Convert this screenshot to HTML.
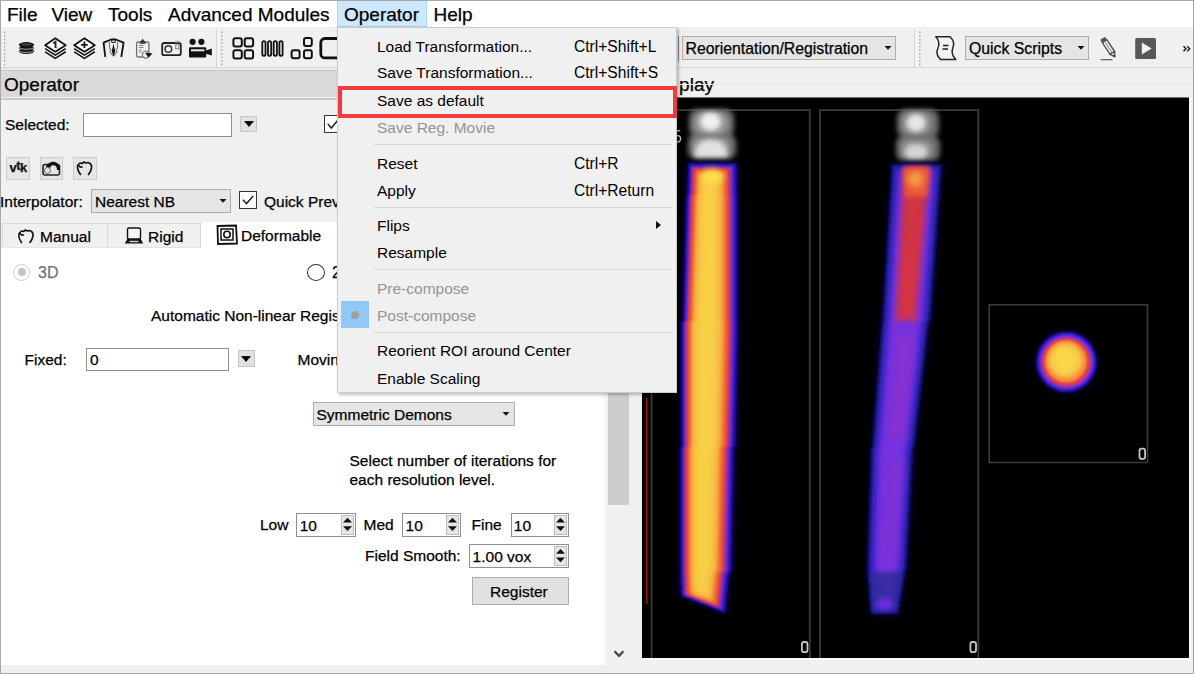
<!DOCTYPE html>
<html><head><meta charset="utf-8"><style>
html,body{margin:0;padding:0;width:1194px;height:674px;overflow:hidden;background:#f0f0f0}
body>div{position:absolute}
.t{position:absolute;font-family:"Liberation Sans",sans-serif;white-space:nowrap;line-height:normal;-webkit-text-stroke:0.25px currentColor}
</style></head><body>
<div style="left:0px;top:0px;width:1194px;height:674px;background:#f0f0f0"></div>
<div style="left:0px;top:0px;width:1194px;height:27px;background:#fff"></div>
<div style="left:337px;top:1px;width:90px;height:26px;background:#cce8ff;border:1px solid #a9d5fa;border-top:none;box-sizing:border-box"></div>
<div class="t" style="left:7px;top:3.80px;font-size:19px;color:#000;">File</div>
<div class="t" style="left:51.5px;top:3.80px;font-size:19px;color:#000;">View</div>
<div class="t" style="left:108px;top:3.80px;font-size:19px;color:#000;">Tools</div>
<div class="t" style="left:168px;top:3.80px;font-size:19px;color:#000;">Advanced Modules</div>
<div class="t" style="left:344px;top:3.80px;font-size:19px;color:#000;">Operator</div>
<div class="t" style="left:433.5px;top:3.80px;font-size:19px;color:#000;">Help</div>
<div style="left:0px;top:27px;width:1194px;height:41px;background:#f0f0f0"></div>
<div style="left:0px;top:67px;width:1194px;height:1.2px;background:#d6d6d6"></div>
<div style="left:681.5px;top:36px;width:214.5px;height:23.5px;background:#e5e5e5;border:1px solid #adadad;box-sizing:border-box"></div>
<div class="t" style="left:685.5px;top:39.70px;font-size:15.8px;color:#000;">Reorientation/Registration</div>
<svg style="position:absolute;left:883.5px;top:44.75px;" width="8" height="6" viewBox="0 0 8 6"><path d="M0.5 1 L7.5 1 L4 4.8Z" fill="#111"/></svg>
<div style="left:965px;top:36px;width:124px;height:23.5px;background:#e5e5e5;border:1px solid #adadad;box-sizing:border-box"></div>
<div class="t" style="left:969px;top:39.70px;font-size:15.8px;color:#000;">Quick Scripts</div>
<svg style="position:absolute;left:1076.8px;top:44.75px;" width="8" height="6" viewBox="0 0 8 6"><path d="M0.5 1 L7.5 1 L4 4.8Z" fill="#111"/></svg>
<svg style="position:absolute;left:0;top:0" width="1194" height="70" viewBox="0 0 1194 70"><rect x="4.5" y="32.2" width="1.4" height="1.4" fill="#ffffff"/><rect x="3.9" y="31.6" width="1.5" height="1.5" fill="#a4a4a4"/><rect x="4.5" y="35.8" width="1.4" height="1.4" fill="#ffffff"/><rect x="3.9" y="35.2" width="1.5" height="1.5" fill="#a4a4a4"/><rect x="4.5" y="39.4" width="1.4" height="1.4" fill="#ffffff"/><rect x="3.9" y="38.8" width="1.5" height="1.5" fill="#a4a4a4"/><rect x="4.5" y="42.9" width="1.4" height="1.4" fill="#ffffff"/><rect x="3.9" y="42.3" width="1.5" height="1.5" fill="#a4a4a4"/><rect x="4.5" y="46.5" width="1.4" height="1.4" fill="#ffffff"/><rect x="3.9" y="45.9" width="1.5" height="1.5" fill="#a4a4a4"/><rect x="4.5" y="50.1" width="1.4" height="1.4" fill="#ffffff"/><rect x="3.9" y="49.5" width="1.5" height="1.5" fill="#a4a4a4"/><rect x="4.5" y="53.7" width="1.4" height="1.4" fill="#ffffff"/><rect x="3.9" y="53.1" width="1.5" height="1.5" fill="#a4a4a4"/><rect x="4.5" y="57.3" width="1.4" height="1.4" fill="#ffffff"/><rect x="3.9" y="56.7" width="1.5" height="1.5" fill="#a4a4a4"/><rect x="4.5" y="60.8" width="1.4" height="1.4" fill="#ffffff"/><rect x="3.9" y="60.2" width="1.5" height="1.5" fill="#a4a4a4"/><rect x="4.5" y="64.4" width="1.4" height="1.4" fill="#ffffff"/><rect x="3.9" y="63.8" width="1.5" height="1.5" fill="#a4a4a4"/><rect x="221.8" y="32.2" width="1.4" height="1.4" fill="#ffffff"/><rect x="221.2" y="31.6" width="1.5" height="1.5" fill="#a4a4a4"/><rect x="221.8" y="35.8" width="1.4" height="1.4" fill="#ffffff"/><rect x="221.2" y="35.2" width="1.5" height="1.5" fill="#a4a4a4"/><rect x="221.8" y="39.4" width="1.4" height="1.4" fill="#ffffff"/><rect x="221.2" y="38.8" width="1.5" height="1.5" fill="#a4a4a4"/><rect x="221.8" y="42.9" width="1.4" height="1.4" fill="#ffffff"/><rect x="221.2" y="42.3" width="1.5" height="1.5" fill="#a4a4a4"/><rect x="221.8" y="46.5" width="1.4" height="1.4" fill="#ffffff"/><rect x="221.2" y="45.9" width="1.5" height="1.5" fill="#a4a4a4"/><rect x="221.8" y="50.1" width="1.4" height="1.4" fill="#ffffff"/><rect x="221.2" y="49.5" width="1.5" height="1.5" fill="#a4a4a4"/><rect x="221.8" y="53.7" width="1.4" height="1.4" fill="#ffffff"/><rect x="221.2" y="53.1" width="1.5" height="1.5" fill="#a4a4a4"/><rect x="221.8" y="57.3" width="1.4" height="1.4" fill="#ffffff"/><rect x="221.2" y="56.7" width="1.5" height="1.5" fill="#a4a4a4"/><rect x="221.8" y="60.8" width="1.4" height="1.4" fill="#ffffff"/><rect x="221.2" y="60.2" width="1.5" height="1.5" fill="#a4a4a4"/><rect x="221.8" y="64.4" width="1.4" height="1.4" fill="#ffffff"/><rect x="221.2" y="63.8" width="1.5" height="1.5" fill="#a4a4a4"/><rect x="919.7" y="32.2" width="1.4" height="1.4" fill="#ffffff"/><rect x="919.1" y="31.6" width="1.5" height="1.5" fill="#a4a4a4"/><rect x="919.7" y="35.8" width="1.4" height="1.4" fill="#ffffff"/><rect x="919.1" y="35.2" width="1.5" height="1.5" fill="#a4a4a4"/><rect x="919.7" y="39.4" width="1.4" height="1.4" fill="#ffffff"/><rect x="919.1" y="38.8" width="1.5" height="1.5" fill="#a4a4a4"/><rect x="919.7" y="42.9" width="1.4" height="1.4" fill="#ffffff"/><rect x="919.1" y="42.3" width="1.5" height="1.5" fill="#a4a4a4"/><rect x="919.7" y="46.5" width="1.4" height="1.4" fill="#ffffff"/><rect x="919.1" y="45.9" width="1.5" height="1.5" fill="#a4a4a4"/><rect x="919.7" y="50.1" width="1.4" height="1.4" fill="#ffffff"/><rect x="919.1" y="49.5" width="1.5" height="1.5" fill="#a4a4a4"/><rect x="919.7" y="53.7" width="1.4" height="1.4" fill="#ffffff"/><rect x="919.1" y="53.1" width="1.5" height="1.5" fill="#a4a4a4"/><rect x="919.7" y="57.3" width="1.4" height="1.4" fill="#ffffff"/><rect x="919.1" y="56.7" width="1.5" height="1.5" fill="#a4a4a4"/><rect x="919.7" y="60.8" width="1.4" height="1.4" fill="#ffffff"/><rect x="919.1" y="60.2" width="1.5" height="1.5" fill="#a4a4a4"/><rect x="919.7" y="64.4" width="1.4" height="1.4" fill="#ffffff"/><rect x="919.1" y="63.8" width="1.5" height="1.5" fill="#a4a4a4"/><rect x="216.5" y="28.5" width="1" height="38.5" fill="#c4c4c4"/><rect x="217.5" y="28.5" width="1" height="38.5" fill="#ffffff"/><rect x="914.3" y="28.5" width="1" height="38.5" fill="#c4c4c4"/><rect x="915.3" y="28.5" width="1" height="38.5" fill="#ffffff"/><ellipse cx="26.5" cy="51.3" rx="7.7" ry="2.7" fill="#111"/><ellipse cx="26.5" cy="48.1" rx="7.7" ry="2.7" fill="#111"/><ellipse cx="26.5" cy="44.8" rx="7.7" ry="2.7" fill="#111"/><path d="M18.9 47.2 A7.7 2.4 0 0 0 34.1 47.2" fill="none" stroke="#bdbdbd" stroke-width="0.9"/><path d="M18.9 50.4 A7.7 2.4 0 0 0 34.1 50.4" fill="none" stroke="#bdbdbd" stroke-width="0.9"/><ellipse cx="26.5" cy="44.5" rx="5.5" ry="1.3" fill="#3a3a3a"/><path d="M45.099999999999994 51.8 L55.3 58.4 L65.7 51.8" fill="none" stroke="#111" stroke-width="1.6" stroke-linejoin="round"/><path d="M45.099999999999994 48.6 L55.3 55.1 L65.7 48.6" fill="none" stroke="#111" stroke-width="1.6" stroke-linejoin="round"/><path d="M45.099999999999994 45.3 L55.3 38.3 L65.7 45.3 L55.3 51.8Z" fill="#fff" stroke="#111" stroke-width="1.7" stroke-linejoin="round"/><path d="M53.3 43.2 L55.5 41.8 L55.5 48" fill="none" stroke="#222" stroke-width="1.9"/><rect x="56.5" y="47.2" width="1.3" height="1.3" fill="#888"/><path d="M74.2 51.8 L84.4 58.4 L94.80000000000001 51.8" fill="none" stroke="#111" stroke-width="1.6" stroke-linejoin="round"/><path d="M74.2 48.6 L84.4 55.1 L94.80000000000001 48.6" fill="none" stroke="#111" stroke-width="1.6" stroke-linejoin="round"/><path d="M74.2 45.3 L84.4 38.3 L94.80000000000001 45.3 L84.4 51.8Z" fill="#fff" stroke="#111" stroke-width="1.7" stroke-linejoin="round"/><path d="M81.10000000000001 44.8 H87.7 M84.4 41.5 V48.1" stroke="#111" stroke-width="1.8"/><path d="M105.3 57 L103.6 42.6 L111.2 39.5 L115.8 39.5 L123.6 42.6 L121.3 57" fill="none" stroke="#111" stroke-width="1.8" stroke-linejoin="round"/><path d="M111.5 39.5 L112 42.5 L115 42.5 L115.6 39.5" fill="none" stroke="#333" stroke-width="1.2"/><path d="M113.5 43.5 L111.8 51 L113.5 57 L115.2 51Z" fill="#111"/><path d="M109.5 42 L109.5 48 L111 50 L110 51.5 L113 56" fill="none" stroke="#777" stroke-width="1.1"/><path d="M117.5 42 L117.5 48 L116 50 L117 51.5 L114 56" fill="none" stroke="#777" stroke-width="1.1"/><rect x="136.6" y="42" width="12.3" height="15" rx="1.5" fill="none" stroke="#707070" stroke-width="1.3"/><path d="M139.8 42.6 L142.7 38.8 L145.6 42.6Z" fill="#333"/><rect x="139.8" y="42.4" width="5.8" height="1.4" fill="#333"/><path d="M139 45.5 H143.5 M139 47.5 H143.5 M139 50 H141.5 M139 52 H141.5" stroke="#888" stroke-width="1"/><circle cx="146" cy="54.6" r="3.6" fill="#f0f0f0" stroke="#777" stroke-width="1.2"/><path d="M145 52.6 L152.6 53.4 L148.4 57.6Z" fill="#111"/><rect x="162.2" y="43" width="18.6" height="12.2" rx="2" fill="none" stroke="#222" stroke-width="1.8"/><circle cx="168.4" cy="49" r="3.3" fill="none" stroke="#333" stroke-width="1.5"/><rect x="175.7" y="44.9" width="3.2" height="3.8" fill="none" stroke="#888" stroke-width="1"/><rect x="175" y="40.8" width="4.6" height="1.8" fill="#aaa"/><circle cx="192.6" cy="41.8" r="3.1" fill="#111"/><circle cx="201.4" cy="41.8" r="3.1" fill="#111"/><rect x="189" y="47.2" width="17.2" height="10.3" rx="1" fill="#111"/><rect x="191" y="49.3" width="13.4" height="2" fill="#eee"/><path d="M206 50.5 L211.8 48.4 L211.8 55.4 L206 53.8Z" fill="#111"/><rect x="233.4" y="38.2" width="8.4" height="8.3" rx="2" fill="none" stroke="#111" stroke-width="2"/><rect x="233.4" y="50.3" width="8.4" height="8.3" rx="2" fill="none" stroke="#111" stroke-width="2"/><rect x="244.7" y="38.2" width="8.4" height="8.3" rx="2" fill="none" stroke="#111" stroke-width="2"/><rect x="244.7" y="50.3" width="8.4" height="8.3" rx="2" fill="none" stroke="#111" stroke-width="2"/><rect x="262.29999999999995" y="41.2" width="3.2" height="14.6" rx="1.6" fill="none" stroke="#111" stroke-width="1.8"/><rect x="267.99999999999994" y="41.2" width="3.2" height="14.6" rx="1.6" fill="none" stroke="#111" stroke-width="1.8"/><rect x="273.69999999999993" y="41.2" width="3.2" height="14.6" rx="1.6" fill="none" stroke="#111" stroke-width="1.8"/><rect x="279.4" y="41.2" width="3.2" height="14.6" rx="1.6" fill="none" stroke="#111" stroke-width="1.8"/><rect x="291.6" y="50.2" width="8" height="8" rx="2" fill="none" stroke="#111" stroke-width="2"/><rect x="304" y="38.1" width="7.8" height="8" rx="2" fill="none" stroke="#111" stroke-width="2"/><rect x="304" y="50.2" width="7.8" height="8" rx="2" fill="none" stroke="#111" stroke-width="2"/><rect x="320.8" y="38.5" width="30" height="19.4" rx="4" fill="none" stroke="#111" stroke-width="2.8"/><path d="M935.8 36.8 L950 36.8 Q955.5 42 952.8 48 Q950.5 54 955.8 59.5 L940.5 59.5 Q935 54 938 48 Q940.5 42 935.8 36.8Z" fill="#f4f4f4" stroke="#222" stroke-width="1.5" stroke-linejoin="round"/><path d="M943 45.5 H948.5 M942.5 49 H948" stroke="#222" stroke-width="1.4"/><g transform="translate(1102.6,38.2) rotate(-33.5)"><rect x="-2.9" y="0" width="5.8" height="3.6" rx="1" fill="#555"/><rect x="-2.7" y="3.6" width="5.4" height="14" fill="#e8e8e8" stroke="#4a4a4a" stroke-width="1.3"/><path d="M-2.7 17.6 L2.7 17.6 L0 22.5Z" fill="#e8e8e8" stroke="#4a4a4a" stroke-width="1.2" stroke-linejoin="round"/><path d="M-1 20 L1 20 L0 22.5Z" fill="#333"/><path d="M0 4 V17" stroke="#888" stroke-width="0.9"/></g><rect x="1100.7" y="59" width="11.7" height="1.3" fill="#666"/><rect x="1135.2" y="38.1" width="20.8" height="20.8" rx="1.5" fill="#585858"/><path d="M1141.8 42.5 L1151.6 48.5 L1141.8 54.5Z" fill="#f2f2f2"/><path d="M1183.5 46.2 L1186 48.7 L1183.5 51.2 M1187.2 46.2 L1189.7 48.7 L1187.2 51.2" fill="none" stroke="#222" stroke-width="1.5"/></svg>
<div style="left:677.5px;top:36px;width:1.5px;height:26px;background:#8c8c8c"></div>
<div style="left:0px;top:68.2px;width:606px;height:2px;background:#eaeaea"></div>
<div style="left:0px;top:70.2px;width:606px;height:1px;background:#c8c8c8"></div>
<div style="left:0px;top:71.2px;width:606px;height:26.3px;background:#d9d9d9"></div>
<div style="left:0px;top:97.5px;width:606px;height:2.3px;background:#c9c9c9"></div>
<div class="t" style="left:4px;top:74.10px;font-size:19px;color:#000;">Operator</div>
<div style="left:0px;top:100px;width:606px;height:148px;background:#f0f0f0"></div>
<div class="t" style="left:5px;top:115.97px;font-size:15.5px;color:#000;">Selected:</div>
<div style="left:83px;top:113px;width:149px;height:24px;background:#fff;border:1px solid #8f8f8f;box-sizing:border-box"></div>
<div style="left:240px;top:116px;width:17px;height:16px;background:#e1e1e1;border:1px solid #c6c6c6;box-sizing:border-box"></div>
<svg style="position:absolute;left:242.5px;top:119.0px;" width="12" height="10" viewBox="0 0 12 10"><path d="M1.5 2.5 L10.5 2.5 L6 8Z" fill="#000"/><rect x="1.5" y="2.2" width="9" height="1.2" fill="#000"/></svg>
<div style="left:323.5px;top:115px;width:17.5px;height:18px;background:#fff;border:1px solid #333;box-sizing:border-box"></div>
<svg style="position:absolute;left:323.5px;top:115px;" width="17.5" height="18" viewBox="0 0 17.5 18"><path d="M3.9 9.0 L7.3 13.0 L14.0 5.0" fill="none" stroke="#222" stroke-width="1.5"/></svg>
<div style="left:6.2px;top:157px;width:23.6px;height:22.5px;background:#e5e5e5;border:1px solid #cdcdcd;box-sizing:border-box"></div>
<div style="left:39.6px;top:157px;width:23.6px;height:22.5px;background:#e5e5e5;border:1px solid #cdcdcd;box-sizing:border-box"></div>
<div style="left:73.2px;top:157px;width:23.6px;height:22.5px;background:#e5e5e5;border:1px solid #cdcdcd;box-sizing:border-box"></div>
<div class="t" style="left:9.5px;top:159.5px;font-size:13px;font-weight:bold;letter-spacing:-0.6px;color:#111">v<span style="position:relative;top:-1.5px">t</span>k</div>
<svg style="position:absolute;left:39.6px;top:157px;" width="23" height="22" viewBox="0 0 23 22"><rect x="3" y="7.5" width="16.5" height="10.5" rx="2" fill="none" stroke="#222" stroke-width="1.6"/><path d="M8 10 Q9 3.5 15 5 Q20 6.5 20 13 L17 13 Q17 8.5 13.5 8 Q11 7.8 10.5 10Z" fill="#111"/><path d="M5.5 9.5 L9.5 5.5 L10.5 11Z" fill="#111"/><circle cx="7.5" cy="13.5" r="3" fill="#e5e5e5" stroke="#666" stroke-width="1"/></svg>
<svg style="position:absolute;left:73.2px;top:157px;" width="23" height="22" viewBox="0 0 23 22"><path d="M7.5 17.5 Q5 14 4.5 11 Q4 8.5 5.5 7.5 L7 6 L9 6.5 L11 5 L13 6 L15 5.5 L17 6.5 Q19 8 18.5 11 Q18 14 15.5 17.5 M5.5 8.5 Q7 10.5 9 10" fill="none" stroke="#111" stroke-width="1.6" stroke-linecap="round" stroke-linejoin="round"/></svg>
<div class="t" style="left:0px;top:192.77px;font-size:15.5px;color:#000;">Interpolator:</div>
<div style="left:91.2px;top:188.5px;width:140.3px;height:24.5px;background:#e5e5e5;border:1px solid #adadad;box-sizing:border-box"></div>
<div class="t" style="left:95px;top:192.77px;font-size:15.5px;color:#000;">Nearest NB</div>
<svg style="position:absolute;left:219.3px;top:197.75px;" width="8" height="6" viewBox="0 0 8 6"><path d="M0.5 1 L7.5 1 L4 4.8Z" fill="#111"/></svg>
<div style="left:239.2px;top:191.3px;width:17.80000000000001px;height:17.5px;background:#fff;border:1px solid #333;box-sizing:border-box"></div>
<svg style="position:absolute;left:239.2px;top:191.3px;" width="17.80000000000001" height="17.5" viewBox="0 0 17.80000000000001 17.5"><path d="M3.9 8.8 L7.5 12.6 L14.2 4.9" fill="none" stroke="#222" stroke-width="1.5"/></svg>
<div class="t" style="left:264px;top:192.77px;font-size:15.5px;color:#000;">Quick Preview</div>
<div style="left:2px;top:223px;width:604px;height:25px;background:#f0f0f0;border-top:1px solid #d9d9d9;box-sizing:border-box"></div>
<div style="left:2px;top:223px;width:1px;height:25px;background:#d9d9d9"></div>
<div style="left:107px;top:223px;width:1px;height:25px;background:#d9d9d9"></div>
<div style="left:200px;top:222px;width:406px;height:26px;background:#fff"></div>
<div style="left:200px;top:222px;width:1px;height:26px;background:#d9d9d9"></div>
<div style="left:2px;top:247px;width:198px;height:1px;background:#e4e4e4"></div>
<svg style="position:absolute;left:17px;top:227px;" width="19" height="18" viewBox="0 0 19 18"><path d="M4.5 15.5 Q2 12 1.8 9 Q1.5 6.5 3 5.5 L4.5 4 L6.5 4.5 L8.5 3 L10.5 4 L12.5 3.5 L14.5 4.5 Q16.5 6 16 9 Q15.5 12 13 15.5 M3 6.5 Q4.5 8.5 6.5 8" fill="none" stroke="#111" stroke-width="1.6" stroke-linecap="round" stroke-linejoin="round"/></svg>
<div class="t" style="left:40px;top:228.07px;font-size:15.5px;color:#000;">Manual</div>
<svg style="position:absolute;left:123px;top:226px;" width="22" height="19" viewBox="0 0 22 19"><rect x="4.5" y="2" width="13" height="11" rx="1.5" fill="#f4f4f4" stroke="#111" stroke-width="1.4"/><path d="M1.8 17.5 L4.2 13 L17.8 13 L20.2 17.5Z" fill="#111"/><rect x="6.5" y="14.8" width="9" height="1.4" fill="#d0d0d0"/></svg>
<div class="t" style="left:148px;top:228.07px;font-size:15.5px;color:#000;">Rigid</div>
<svg style="position:absolute;left:216px;top:224px;" width="22" height="21" viewBox="0 0 22 21"><path d="M1.5 2 L20 1.5 L21 19.5 L2 20Z" fill="#fff" stroke="#111" stroke-width="1.8"/><rect x="5" y="5" width="12" height="11" fill="none" stroke="#111" stroke-width="1.5"/><circle cx="11" cy="10.5" r="3.2" fill="none" stroke="#111" stroke-width="1.6"/></svg>
<div class="t" style="left:241px;top:226.57px;font-size:15.5px;color:#000;">Deformable</div>
<div style="left:0px;top:248px;width:604px;height:417px;background:#fff"></div>
<div style="left:13px;top:263.5px;width:17px;height:17px;border-radius:50%;border:1px solid #cfcfcf;box-sizing:border-box;background:#fff"></div>
<div style="left:17.5px;top:268px;width:8px;height:8px;border-radius:50%;background:#c4c4c4"></div>
<div class="t" style="left:38px;top:263.82px;font-size:16px;color:#727272;">3D</div>
<div style="left:307px;top:263.5px;width:18px;height:17px;border-radius:50%;border:1px solid #333;box-sizing:border-box;background:#fff"></div>
<div class="t" style="left:332px;top:263.82px;font-size:16px;color:#000;">2D</div>
<div class="t" style="left:151px;top:307.47px;font-size:15.5px;color:#000;">Automatic Non-linear Registration</div>
<div class="t" style="left:24.5px;top:350.97px;font-size:15.5px;color:#000;">Fixed:</div>
<div style="left:86px;top:347.5px;width:143px;height:23.5px;background:#fff;border:1px solid #8f8f8f;box-sizing:border-box"></div>
<div class="t" style="left:90px;top:350.97px;font-size:15.5px;color:#000;">0</div>
<div style="left:237.5px;top:350px;width:17.0px;height:17px;background:#e1e1e1;border:1px solid #c6c6c6;box-sizing:border-box"></div>
<svg style="position:absolute;left:240.0px;top:353.5px;" width="12" height="10" viewBox="0 0 12 10"><path d="M1.5 2.5 L10.5 2.5 L6 8Z" fill="#000"/><rect x="1.5" y="2.2" width="9" height="1.2" fill="#000"/></svg>
<div class="t" style="left:297.5px;top:350.97px;font-size:15.5px;color:#000;">Moving:</div>
<div style="left:313.3px;top:402px;width:201.7px;height:24px;background:#e5e5e5;border:1px solid #adadad;box-sizing:border-box"></div>
<div class="t" style="left:316.5px;top:405.97px;font-size:15.5px;color:#000;">Symmetric Demons</div>
<svg style="position:absolute;left:502.4px;top:411.0px;" width="8" height="6" viewBox="0 0 8 6"><path d="M0.5 1 L7.5 1 L4 4.8Z" fill="#111"/></svg>
<div class="t" style="left:349.5px;top:451.97px;font-size:15.5px;color:#000;">Select number of iterations for</div>
<div class="t" style="left:349.5px;top:471.27px;font-size:15.5px;color:#000;">each resolution level.</div>
<div class="t" style="left:260px;top:516.47px;font-size:15.5px;color:#000;">Low</div>
<div style="left:296.4px;top:513px;width:59.60000000000002px;height:23.5px;background:#fff;border:1px solid #8f8f8f;box-sizing:border-box"></div>
<div class="t" style="left:299.7px;top:516.97px;font-size:15.5px;color:#000;">10</div>
<div style="left:341px;top:515px;width:13px;height:19.5px;background:#e6e6e6;border:1px solid #bdbdbd;box-sizing:border-box"></div>
<svg style="position:absolute;left:341px;top:515px;" width="13" height="19.5" viewBox="0 0 13 19.5"><path d="M2 7.5 L6.5 2.8 L11 7.5Z M2 11.2 L6.5 15.9 L11 11.2Z" fill="#111"/></svg>
<div class="t" style="left:363.5px;top:516.47px;font-size:15.5px;color:#000;">Med</div>
<div style="left:402.3px;top:513px;width:58.69999999999999px;height:23.5px;background:#fff;border:1px solid #8f8f8f;box-sizing:border-box"></div>
<div class="t" style="left:405.6px;top:516.97px;font-size:15.5px;color:#000;">10</div>
<div style="left:446px;top:515px;width:13px;height:19.5px;background:#e6e6e6;border:1px solid #bdbdbd;box-sizing:border-box"></div>
<svg style="position:absolute;left:446px;top:515px;" width="13" height="19.5" viewBox="0 0 13 19.5"><path d="M2 7.5 L6.5 2.8 L11 7.5Z M2 11.2 L6.5 15.9 L11 11.2Z" fill="#111"/></svg>
<div class="t" style="left:471.5px;top:516.47px;font-size:15.5px;color:#000;">Fine</div>
<div style="left:510.5px;top:513px;width:58.5px;height:23.5px;background:#fff;border:1px solid #8f8f8f;box-sizing:border-box"></div>
<div class="t" style="left:513.8px;top:516.97px;font-size:15.5px;color:#000;">10</div>
<div style="left:554px;top:515px;width:13px;height:19.5px;background:#e6e6e6;border:1px solid #bdbdbd;box-sizing:border-box"></div>
<svg style="position:absolute;left:554px;top:515px;" width="13" height="19.5" viewBox="0 0 13 19.5"><path d="M2 7.5 L6.5 2.8 L11 7.5Z M2 11.2 L6.5 15.9 L11 11.2Z" fill="#111"/></svg>
<div class="t" style="left:365px;top:547.17px;font-size:15.5px;color:#000;">Field Smooth:</div>
<div style="left:469.3px;top:544px;width:99.69999999999999px;height:24px;background:#fff;border:1px solid #8f8f8f;box-sizing:border-box"></div>
<div class="t" style="left:472.6px;top:547.97px;font-size:15.5px;color:#000;">1.00 vox</div>
<div style="left:554px;top:546px;width:13px;height:20px;background:#e6e6e6;border:1px solid #bdbdbd;box-sizing:border-box"></div>
<svg style="position:absolute;left:554px;top:546px;" width="13" height="20" viewBox="0 0 13 20"><path d="M2 7.8 L6.5 3.0 L11 7.8Z M2 11.4 L6.5 16.2 L11 11.4Z" fill="#111"/></svg>
<div style="left:471.5px;top:577px;width:97px;height:28px;background:#e1e1e1;border:1px solid #adadad;box-sizing:border-box"></div>
<div class="t" style="left:490px;top:582.77px;font-size:15.5px;color:#000;">Register</div>
<div style="left:604px;top:248px;width:38px;height:417px;background:#f0f0f0"></div>
<div style="left:604px;top:248px;width:3px;height:417px;background:#f7f7f7"></div>
<div style="left:607.8px;top:250px;width:21.4px;height:254.6px;background:#cdcdcd"></div>
<svg style="position:absolute;left:613px;top:649px;" width="12" height="10" viewBox="0 0 12 10"><path d="M1.6 2.2 L6 6.8 L10.4 2.2" fill="none" stroke="#454545" stroke-width="2.2"/></svg>
<div style="left:606px;top:68.2px;width:588px;height:29.1px;background:#f0f0f0"></div>
<div class="t" style="left:679.1px;top:74.10px;font-size:19px;color:#000;">play</div>
<div style="left:606px;top:84px;width:588px;height:1px;background:#e6e6e6"></div>
<svg style="position:absolute;left:0;top:0" width="1194" height="674" viewBox="0 0 1194 674"><defs><filter id="b08" x="-50%" y="-50%" width="200%" height="200%"><feGaussianBlur stdDeviation="0.8"/></filter><filter id="b1" x="-50%" y="-50%" width="200%" height="200%"><feGaussianBlur stdDeviation="1.2"/></filter><filter id="b15" x="-50%" y="-50%" width="200%" height="200%"><feGaussianBlur stdDeviation="1.6"/></filter><filter id="b2" x="-50%" y="-50%" width="200%" height="200%"><feGaussianBlur stdDeviation="2"/></filter><filter id="b25" x="-50%" y="-50%" width="200%" height="200%"><feGaussianBlur stdDeviation="2.5"/></filter><filter id="b3" x="-50%" y="-50%" width="200%" height="200%"><feGaussianBlur stdDeviation="3"/></filter><filter id="b4" x="-50%" y="-50%" width="200%" height="200%"><feGaussianBlur stdDeviation="4"/></filter><filter id="b5" x="-50%" y="-50%" width="200%" height="200%"><feGaussianBlur stdDeviation="5"/></filter><clipPath id="imgclip"><rect x="642" y="97.3" width="547" height="560.8"/></clipPath></defs><g clip-path="url(#imgclip)"><rect x="642" y="97.3" width="547" height="560.8" fill="#000"/><path d="M651.6 658 V110.2 H809.8 V658" fill="none" stroke="#3a3a3a" stroke-width="1.8"/><path d="M820 658 V110.2 H978.3 V658" fill="none" stroke="#3a3a3a" stroke-width="1.8"/><rect x="989.2" y="304.8" width="158.3" height="157.7" fill="none" stroke="#3a3a3a" stroke-width="1.6"/><rect x="646.1" y="397.5" width="1.4" height="206.5" fill="#b01818"/><g filter="url(#b25)"><rect x="689" y="109" width="45" height="28" rx="9" fill="#6e6e6e"/><rect x="688" y="134" width="48" height="25" rx="8" fill="#6e6e6e"/><rect x="694" y="112" width="34" height="22" rx="10" fill="#9a9a9a"/><rect x="693" y="138" width="36" height="20" rx="8" fill="#9a9a9a"/><ellipse cx="710.5" cy="121.5" rx="10" ry="9" fill="#f0f0f0"/><path d="M695 158 Q695 140 711 140 Q727 140 727 158Z" fill="#e2e2e2"/></g><path d="M688 604 L689 650 Q707 656 724 650 L725 616" fill="none" stroke="#101010" stroke-width="2.5" filter="url(#b2)"/><path d="M687.0 162.0 L687.0 163.0 L686.0 195.0 L685.0 195.0 L681.5 322.0 L680.0 322.0 L680.0 447.0 L679.0 447.0 L679.0 572.0 L679.0 572.0 L679.9 596.2 L727.0 614.6 L727.0 613.0 L731.0 572.0 L733.0 572.0 L735.5 447.0 L737.0 447.0 L739.5 322.0 L739.0 322.0 L739.0 195.0 L738.5 195.0 L738.5 163.0 L738.5 162.0Z" fill="#0c0660" filter="url(#b25)"/><path d="M688.8 163.8 L687.8 195.0 L686.8 195.0 L683.3 322.0 L681.8 322.0 L681.8 447.0 L680.8 447.0 L680.8 572.0 L680.8 572.0 L681.7 595.7 L724.8 612.6 L728.8 572.0 L730.8 572.0 L733.3 447.0 L734.8 447.0 L737.3 322.0 L736.8 322.0 L736.8 195.0 L736.3 195.0 L736.3 163.8Z" fill="#2c18b0" filter="url(#b1)"/><path d="M691.1 166.2 L690.2 195.0 L689.2 195.0 L685.7 322.0 L684.2 322.0 L684.2 447.0 L683.2 447.0 L683.2 572.0 L683.2 572.0 L684.0 595.1 L721.8 609.8 L725.5 572.0 L727.5 572.0 L730.0 447.0 L731.5 447.0 L734.0 322.0 L733.5 322.0 L733.5 195.0 L733.0 195.0 L733.0 166.2Z" fill="#7a2ad8" filter="url(#b1)"/><path d="M693.0 168.2 L692.2 195.0 L691.2 195.0 L687.7 322.0 L686.2 322.0 L686.2 447.0 L685.2 447.0 L685.2 572.0 L685.2 572.0 L686.0 594.6 L718.8 607.2 L722.2 572.0 L724.2 572.0 L726.7 447.0 L728.2 447.0 L730.7 322.0 L730.2 322.0 L730.2 195.0 L729.7 195.0 L729.7 168.2Z" fill="#e03a3a" filter="url(#b1)"/><path d="M695.6 170.8 L694.8 195.0 L693.8 195.0 L690.3 322.0 L688.8 322.0 L688.8 447.0 L687.8 447.0 L687.8 572.0 L687.8 572.0 L688.6 594.0 L716.0 604.4 L719.2 572.0 L721.2 572.0 L723.7 447.0 L725.2 447.0 L727.7 322.0 L727.2 322.0 L727.2 195.0 L726.7 195.0 L726.7 170.8Z" fill="#f26a38" filter="url(#b15)"/><path d="M698.2 173.5 L697.5 195.0 L696.5 195.0 L693.0 322.0 L691.5 322.0 L691.5 447.0 L690.5 447.0 L690.5 572.0 L690.5 572.0 L691.3 593.3 L712.7 601.2 L715.5 572.0 L717.5 572.0 L720.0 447.0 L721.5 447.0 L724.0 322.0 L723.5 322.0 L723.5 195.0 L723.0 195.0 L723.0 173.5Z" fill="#f5a03e" filter="url(#b15)"/><path d="M700.6 176.0 L700.0 195.0 L699.0 195.0 L695.5 322.0 L694.0 322.0 L694.0 447.0 L693.0 447.0 L693.0 572.0 L693.0 572.0 L693.8 592.7 L709.9 598.4 L712.5 572.0 L714.5 572.0 L717.0 447.0 L718.5 447.0 L721.0 322.0 L720.5 322.0 L720.5 195.0 L720.0 195.0 L720.0 176.0Z" fill="#f6bc42" filter="url(#b2)"/><path d="M703.5 179.0 L703.0 195.0 L702.0 195.0 L698.5 322.0 L697.0 322.0 L697.0 447.0 L696.0 447.0 L696.0 572.0 L696.0 572.0 L696.7 591.9 L706.3 594.9 L708.5 572.0 L710.5 572.0 L713.0 447.0 L714.5 447.0 L717.0 322.0 L716.5 322.0 L716.5 195.0 L716.0 195.0 L716.0 179.0Z" fill="#f8d046" filter="url(#b3)"/><ellipse cx="712" cy="176" rx="11" ry="7" fill="#fae448" filter="url(#b3)"/><g filter="url(#b25)"><rect x="897" y="109" width="42" height="29" rx="9" fill="#6a6a6a"/><rect x="896" y="136" width="44" height="25" rx="8" fill="#6a6a6a"/><rect x="902" y="112" width="29" height="22" rx="9" fill="#929292"/><rect x="901" y="140" width="31" height="19" rx="8" fill="#929292"/><ellipse cx="916" cy="123" rx="9" ry="8.5" fill="#e6e6e6"/><ellipse cx="916" cy="152" rx="11" ry="7.5" fill="#d6d6d6"/></g><path d="M870 616 L869 650 Q882 656 896 650 L897 616" fill="none" stroke="#101010" stroke-width="2.5" filter="url(#b2)"/><path d="M891.0 163.5 L891.0 164.5 L881.5 322.0 L881.0 322.0 L871.5 447.0 L870.5 447.0 L866.3 571.0 L866.5 571.0 L870.0 614.0 L870.0 615.0 L899.0 615.0 L899.0 614.0 L906.5 571.0 L907.5 571.0 L914.5 447.0 L915.5 447.0 L930.0 322.0 L931.5 322.0 L943.0 164.5 L943.0 163.5Z" fill="#100860" filter="url(#b25)" opacity="1"/><path d="M893.4 166.0 L884.0 322.0 L883.5 322.0 L874.0 447.0 L873.0 447.0 L868.8 571.0 L869.0 571.0 L872.4 612.5 L896.3 612.5 L903.5 571.0 L904.5 571.0 L911.5 447.0 L912.5 447.0 L927.0 322.0 L928.5 322.0 L939.9 166.0Z" fill="#2a20b0" filter="url(#b15)" opacity="1"/><path d="M897.2 170.0 L888.0 322.0 L887.5 322.0 L878.0 447.0 L877.0 447.0 L872.8 571.0 L873.0 571.0 L876.1 608.5 L893.0 608.5 L899.5 571.0 L900.5 571.0 L907.5 447.0 L908.5 447.0 L923.0 322.0 L924.5 322.0 L935.6 170.0Z" fill="#5a2cd8" filter="url(#b2)" opacity="1"/><path d="M900.9 174.0 L892.0 322.0 L891.5 322.0 L882.0 447.0 L881.0 447.0 L876.8 571.0 L877.0 571.0 L879.7 604.5 L889.7 604.5 L895.5 571.0 L896.5 571.0 L903.5 447.0 L904.5 447.0 L919.0 322.0 L920.5 322.0 L931.3 174.0Z" fill="#7430de" filter="url(#b2)" opacity="1"/><path d="M902.5 166.5 L894.0 322.0 L917.5 322.0 L931.0 166.5Z" fill="#a03098" filter="url(#b2)"/><path d="M905.9 167.5 L897.7 318.5 L914.3 318.5 L927.4 167.5Z" fill="#c83058" filter="url(#b2)"/><path d="M908.9 168.5 L900.9 315.5 L911.6 315.5 L924.3 168.5Z" fill="#d23440" filter="url(#b25)"/><path d="M903 168 L930 168 L927 197 L905 197Z" fill="#e85838" filter="url(#b2)"/><ellipse cx="915.5" cy="179" rx="8" ry="7.5" fill="#f5a040" filter="url(#b3)"/><path d="M897 335 L915 335 L903 440 L889 440Z" fill="#a030b8" opacity="0.4" filter="url(#b4)"/><path d="M887 460 L905 460 L896 560 L880 560Z" fill="#9030c8" opacity="0.3" filter="url(#b4)"/><path d="M870.5 572.0 L872.4 611.0 L896.5 611.0 L902.5 572.0Z" fill="#2a2a90" opacity="0.75" filter="url(#b2)"/><ellipse cx="884.5" cy="604" rx="8.5" ry="6" fill="#6a2ce0" filter="url(#b25)"/><circle cx="1066.5" cy="362" r="31" fill="#180a80" filter="url(#b2)"/><circle cx="1066.5" cy="362" r="29" fill="#3a22d8" filter="url(#b1)"/><circle cx="1066.5" cy="362" r="26.5" fill="#8a30e0" filter="url(#b1)"/><circle cx="1066.5" cy="362" r="24" fill="#e63a3a" filter="url(#b1)"/><circle cx="1066" cy="361.5" r="21" fill="#f48a3a" filter="url(#b1)"/><circle cx="1065.5" cy="360.5" r="17" fill="#f8c846" filter="url(#b2)"/><circle cx="1065" cy="360" r="11" fill="#fad84a" filter="url(#b3)"/><path d="M676 130.8 H680.2 M676 135.6 Q680.6 135.2 680.6 138.8 Q680.6 142.2 676 142" fill="none" stroke="#bcbcbc" stroke-width="1.5"/><rect x="801.9" y="642.0" width="5.6" height="10.2" rx="2.2" fill="none" stroke="#c6c6c6" stroke-width="1.8"/><rect x="970.4" y="642.0" width="5.6" height="10.2" rx="2.2" fill="none" stroke="#c6c6c6" stroke-width="1.8"/><rect x="1139.5" y="448.7" width="5.6" height="10.2" rx="2.2" fill="none" stroke="#c6c6c6" stroke-width="1.8"/></g></svg>
<div style="left:1189px;top:97px;width:4px;height:568px;background:#f0f0f0"></div>
<div style="left:642px;top:657.5px;width:549px;height:2.5px;background:#fafafa"></div>
<div style="left:1189px;top:97px;width:2px;height:563px;background:#fafafa"></div>
<div style="left:0px;top:665px;width:1194px;height:8px;background:#efefef"></div>
<div style="left:0px;top:0px;width:1194px;height:1px;background:#a8a8a8"></div>
<div style="left:0px;top:0px;width:1px;height:674px;background:#a8a8a8"></div>
<div style="left:1192.7px;top:0px;width:1.3px;height:674px;background:#a8a8a8"></div>
<div style="left:0px;top:673px;width:1194px;height:1px;background:#a8a8a8"></div>
<div style="left:337px;top:27px;width:340px;height:366px;background:#f0f0f0;border:1px solid #cccccc;box-sizing:border-box;box-shadow:2px 2px 3px rgba(0,0,0,0.25)"></div>
<div class="t" style="left:377px;top:37.67px;font-size:15.5px;color:#000;-webkit-text-stroke:0">Load Transformation...</div>
<div class="t" style="left:574px;top:37.58px;font-size:15.6px;color:#000;-webkit-text-stroke:0">Ctrl+Shift+L</div>
<div class="t" style="left:377px;top:64.37px;font-size:15.5px;color:#000;-webkit-text-stroke:0">Save Transformation...</div>
<div class="t" style="left:574px;top:64.28px;font-size:15.6px;color:#000;-webkit-text-stroke:0">Ctrl+Shift+S</div>
<div class="t" style="left:377px;top:91.97px;font-size:15.5px;color:#000;-webkit-text-stroke:0">Save as default</div>
<div class="t" style="left:377px;top:118.67px;font-size:15.5px;color:#959595;-webkit-text-stroke:0">Save Reg. Movie</div>
<div class="t" style="left:377px;top:155.27px;font-size:15.5px;color:#000;-webkit-text-stroke:0">Reset</div>
<div class="t" style="left:574px;top:155.18px;font-size:15.6px;color:#000;-webkit-text-stroke:0">Ctrl+R</div>
<div class="t" style="left:377px;top:182.27px;font-size:15.5px;color:#000;-webkit-text-stroke:0">Apply</div>
<div class="t" style="left:574px;top:182.18px;font-size:15.6px;color:#000;-webkit-text-stroke:0">Ctrl+Return</div>
<div class="t" style="left:377px;top:216.97px;font-size:15.5px;color:#000;-webkit-text-stroke:0">Flips</div>
<div class="t" style="left:377px;top:243.97px;font-size:15.5px;color:#000;-webkit-text-stroke:0">Resample</div>
<div class="t" style="left:377px;top:279.57px;font-size:15.5px;color:#959595;-webkit-text-stroke:0">Pre-compose</div>
<div class="t" style="left:377px;top:307.27px;font-size:15.5px;color:#959595;-webkit-text-stroke:0">Post-compose</div>
<div class="t" style="left:377px;top:341.97px;font-size:15.5px;color:#000;-webkit-text-stroke:0">Reorient ROI around Center</div>
<div class="t" style="left:377px;top:369.57px;font-size:15.5px;color:#000;-webkit-text-stroke:0">Enable Scaling</div>
<div style="left:374px;top:144px;width:298px;height:1px;background:#d7d7d7"></div>
<div style="left:374px;top:207px;width:298px;height:1px;background:#d7d7d7"></div>
<div style="left:374px;top:269px;width:298px;height:1px;background:#d7d7d7"></div>
<div style="left:374px;top:332px;width:298px;height:1px;background:#d7d7d7"></div>
<svg style="position:absolute;left:655px;top:220px;" width="8" height="10" viewBox="0 0 8 10"><path d="M1 1 L6 5 L1 9Z" fill="#111"/></svg>
<div style="left:341px;top:301px;width:28px;height:27px;background:#90c8f6"></div>
<div style="left:351px;top:311px;width:8px;height:8px;border-radius:50%;background:#a0a0a0"></div>
<div style="left:338px;top:86px;width:339px;height:32px;border:4px solid #ef3b40;box-sizing:border-box"></div>
</body></html>
